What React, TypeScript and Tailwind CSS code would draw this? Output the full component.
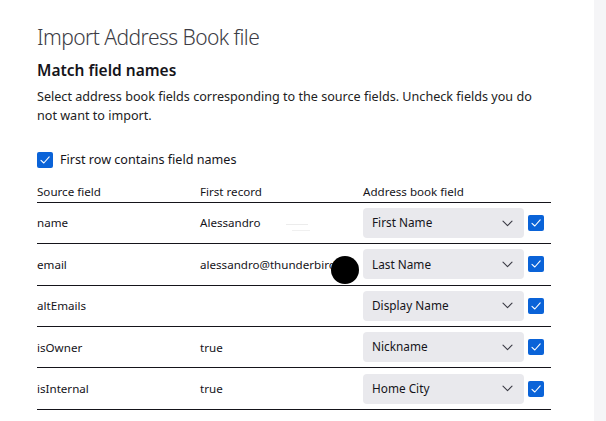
import React from 'react';

const rows = [
  { source: 'name', record: 'Alessandro', field: 'First Name' },
  { source: 'email', record: 'alessandro@thunderbird', field: 'Last Name' },
  { source: 'altEmails', record: '', field: 'Display Name' },
  { source: 'isOwner', record: 'true', field: 'Nickname' },
  { source: 'isInternal', record: 'true', field: 'Home City' },
];

function Check() {
  return (
    <span className="flex h-4 w-4 shrink-0 items-center justify-center rounded-[2px] bg-[#0a63d8]">
      <svg width="12" height="12" viewBox="0 0 12 12" fill="none">
        <path d="M2 6.3 L4.8 9 L10.2 2.8" stroke="white" strokeWidth="1.1" strokeLinecap="round" strokeLinejoin="round" />
      </svg>
    </span>
  );
}

function Chevron() {
  return (
    <svg width="11" height="7" viewBox="0 0 11 7" fill="none">
      <path d="M1 1.2 L5.5 5.6 L10 1.2" stroke="#3b3b45" strokeWidth="1.1" strokeLinecap="round" strokeLinejoin="round" />
    </svg>
  );
}

export default function App() {
  return (
    <div
      className="flex h-[421px] w-[606px] overflow-hidden bg-white text-[#15141a]"
      style={{ fontFamily: '"Noto Sans", "Open Sans", sans-serif' }}
    >
      <main className="relative flex-1 pl-[37px] pt-[22px]">
        <h1 className="text-[21px] font-light leading-[30px] tracking-[-0.55px] text-[#3c3c44]">
          Import Address Book file
        </h1>
        <h2 className="mt-[6px] text-[15.5px] font-semibold leading-[24px]">Match field names</h2>
        <p className="mt-[5px] w-[505px] text-[12.6px] leading-[19px] text-[#222]">
          Select address book fields corresponding to the source fields. Uncheck fields you do not want to import.
        </p>

        <label className="mt-[26px] flex items-center gap-[7px] text-[12.6px]">
          <Check />
          <span>First row contains field names</span>
        </label>

        <div className="mt-[13px] w-[514px]">
          <div className="grid grid-cols-[163px_163px_188px] border-b border-[#15141a] pb-[2px] text-[11.6px] leading-[17px]">
            <span>Source field</span>
            <span>First record</span>
            <span>Address book field</span>
          </div>
          {rows.map((r) => (
            <div
              key={r.source}
              className="grid h-[41.4px] grid-cols-[163px_163px_188px] items-center border-b border-[#15141a] text-[11.6px]"
            >
              <span>{r.source}</span>
              <span className="whitespace-nowrap">{r.record}</span>
              <div className="flex items-center gap-[4px]">
                <div className="flex h-[30px] w-[161px] items-center justify-between rounded-[4px] bg-[#e9e9ed] pl-[9px] pr-[11px]">
                  <span className="text-[11.8px]">{r.field}</span>
                  <Chevron />
                </div>
                <Check />
              </div>
            </div>
          ))}
        </div>

        <span className="absolute left-[331px] top-[256px] h-[28px] w-[28px] rounded-full bg-black" />
        <span className="absolute left-[286px] top-[224px] h-px w-[22px] bg-[#ececec]" />
        <span className="absolute left-[292px] top-[230px] h-px w-[18px] bg-[#f0f0f0]" />
      </main>
      <aside className="h-full w-[12px] bg-[#f5f5f7]" />
    </div>
  );
}
